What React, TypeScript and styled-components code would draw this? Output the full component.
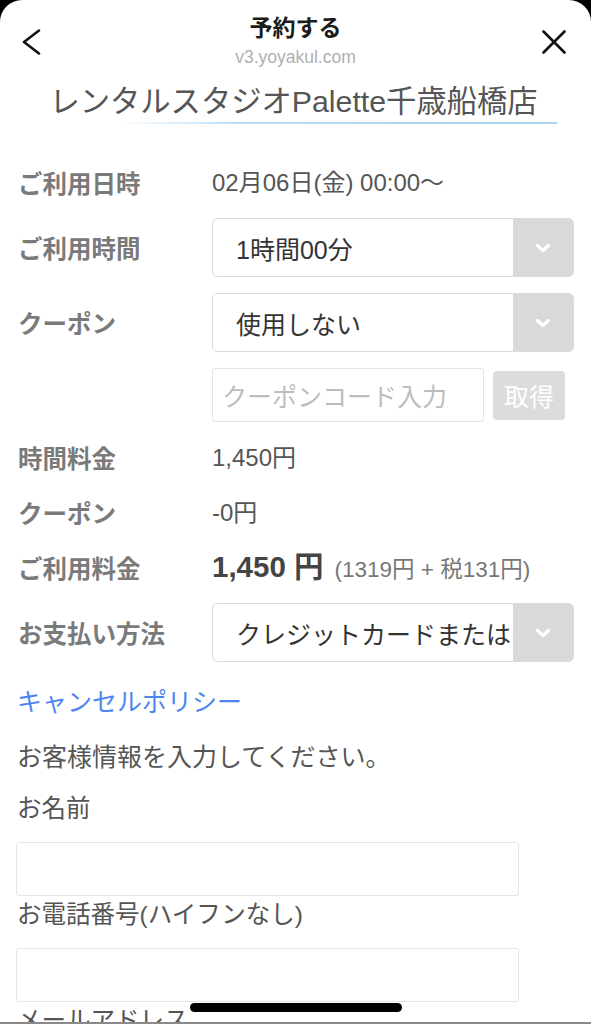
import React from "react"
import styled, { createGlobalStyle } from "styled-components"

const GlobalStyle = createGlobalStyle`
    html, body {
        margin: 0;
        padding: 0;
        background: #000;
    }
    body {
        font-family: "Liberation Sans", "Noto Sans CJK JP", sans-serif;
    }
`

const Sheet = styled.div`
    position: relative;
    height: 1024px;
    overflow: hidden;
    background: #fff;
    border-radius: 22px 22px 0 0;
`

const Header = styled.header`
    display: grid;
    grid-template-columns: 70px 1fr 70px;
    align-items: center;
    padding-top: 14px;
`

const IconButton = styled.div<{ $side: "left" | "right" }>`
    display: flex;
    justify-content: ${({ $side }) => ($side === "left" ? "flex-start" : "flex-end")};
    padding: ${({ $side }) => ($side === "left" ? "2px 0 0 20px" : "2px 25px 0 0")};
    color: #111;
`

const HeaderCenter = styled.div`
    display: flex;
    flex-direction: column;
    align-items: center;
`

const HeaderTitle = styled.div`
    font-size: 23px;
    line-height: 29px;
    font-weight: 700;
    color: #1c1c1c;
`

const HeaderUrl = styled.div`
    margin-top: 3px;
    font-size: 17.5px;
    line-height: 22px;
    color: #b0b0b0;
`

const ShopTitle = styled.h1`
    margin: 14px 34px 0 30px;
    font-size: 30.3px;
    line-height: 40px;
    font-weight: 400;
    color: #555;
    text-align: center;
    white-space: nowrap;
`

const Underline = styled.div`
    height: 2px;
    margin: 0 34px;
    background: linear-gradient(to right, rgba(168, 212, 245, 0) 0%, rgba(168, 212, 245, 0) 16%, #b6dcf6 40%, #a9d4f4 100%);
`

const Form = styled.div`
    display: flex;
    flex-direction: column;
    gap: 16px;
    margin-top: 39px;
    padding: 0 17px 0 18px;
`

const Row = styled.div<{ $tall?: boolean }>`
    display: flex;
    align-items: center;
    height: ${({ $tall }) => ($tall ? 59 : 39)}px;
`

const Label = styled.div`
    flex: 0 0 194px;
    font-size: 24.5px;
    font-weight: 700;
    color: #7a7a7a;
    white-space: nowrap;
`

const Value = styled.div`
    font-size: 24px;
    line-height: 39px;
    color: #555;
    white-space: nowrap;
`

const Total = styled.span`
    font-size: 29.5px;
    font-weight: 700;
    color: #444;
`

const TotalNote = styled.span`
    margin-left: 11px;
    font-size: 22.5px;
    color: #777;
`

const Select = styled.div`
    flex: 1;
    display: flex;
    height: 59px;
    box-sizing: border-box;
    border: 1px solid #dcdcdc;
    border-radius: 5px;
    overflow: hidden;
    background: #fff;
`

const SelectText = styled.div`
    flex: 1;
    display: flex;
    align-items: center;
    padding-left: 23px;
    font-size: 25px;
    color: #333;
    white-space: nowrap;
    overflow: hidden;
`

const SelectArrow = styled.div`
    flex: 0 0 60px;
    display: flex;
    align-items: center;
    justify-content: center;
    background: #d9d9d9;
`

const CouponRow = styled.div`
    display: flex;
    align-items: center;
    gap: 9px;
    padding-left: 194px;
    padding-right: 9px;
`

const CouponInput = styled.div`
    flex: 0 0 272px;
    height: 54px;
    box-sizing: border-box;
    display: flex;
    align-items: center;
    padding-left: 9px;
    border: 1px solid #e2e2e2;
    border-radius: 3px;
    font-size: 25px;
    color: #bdbdbd;
    white-space: nowrap;
    overflow: hidden;
`

const CouponButton = styled.div`
    flex: 1;
    height: 49px;
    display: flex;
    align-items: center;
    justify-content: center;
    background: #dcdcdc;
    border-radius: 4px;
    font-size: 25px;
    color: #fff;
`

const Link = styled.div`
    margin: 22px 0 0 17px;
    font-size: 25px;
    line-height: 36px;
    color: #4d86ef;
`

const Notice = styled.div`
    margin: 19px 0 0 17px;
    font-size: 25px;
    line-height: 36px;
    color: #555;
`

const Fields = styled.div`
    display: flex;
    flex-direction: column;
    margin-top: 15px;
    padding: 0 72px 0 16px;
`

const FieldLabel = styled.div`
    padding-left: 1px;
    font-size: 24.5px;
    line-height: 38px;
    color: #555;
    white-space: nowrap;
`

const FieldInput = styled.div`
    height: 54px;
    margin-top: 14px;
    box-sizing: border-box;
    border: 1px solid #e6e6e6;
    border-radius: 3px;
`

const BottomEdge = styled.div`
    position: absolute;
    left: 0;
    right: 0;
    bottom: 0;
    height: 2px;
    background: #8a8a8a;
`

const HomeIndicator = styled.div`
    position: absolute;
    left: 190px;
    bottom: 12px;
    width: 212px;
    height: 9px;
    border-radius: 5px;
    background: #000;
`

const Chevron = () => (
    <svg width="16" height="10" viewBox="0 0 16 10">
        <path d="M2.5 2.5 L8 7.5 L13.5 2.5" fill="none" stroke="#fff" strokeWidth="3.4" strokeLinecap="round" strokeLinejoin="round" />
    </svg>
)

const SelectBox = ({ text }: { text: string }) => (
    <Select>
        <SelectText>{text}</SelectText>
        <SelectArrow>
            <Chevron />
        </SelectArrow>
    </Select>
)

const App = () => {
    return (
        <>
            <GlobalStyle />
            <Sheet>
                <Header>
                    <IconButton $side="left">
                        <svg width="22" height="26" viewBox="0 0 22 26">
                            <path d="M19 1.5 L4 13 L19 24.5" fill="none" stroke="#111" strokeWidth="2.6" strokeLinecap="round" strokeLinejoin="round" />
                        </svg>
                    </IconButton>
                    <HeaderCenter>
                        <HeaderTitle>予約する</HeaderTitle>
                        <HeaderUrl>v3.yoyakul.com</HeaderUrl>
                    </HeaderCenter>
                    <IconButton $side="right">
                        <svg width="24" height="24" viewBox="0 0 24 24">
                            <path d="M1.5 1.5 L22.5 22.5 M22.5 1.5 L1.5 22.5" fill="none" stroke="#111" strokeWidth="2.6" strokeLinecap="round" />
                        </svg>
                    </IconButton>
                </Header>

                <ShopTitle>レンタルスタジオPalette千歳船橋店</ShopTitle>
                <Underline />

                <Form>
                    <Row>
                        <Label>ご利用日時</Label>
                        <Value>02月06日(金) 00:00〜</Value>
                    </Row>
                    <Row $tall>
                        <Label>ご利用時間</Label>
                        <SelectBox text="1時間00分" />
                    </Row>
                    <Row $tall>
                        <Label>クーポン</Label>
                        <SelectBox text="使用しない" />
                    </Row>
                    <CouponRow>
                        <CouponInput>クーポンコード入力</CouponInput>
                        <CouponButton>取得</CouponButton>
                    </CouponRow>
                    <Row>
                        <Label>時間料金</Label>
                        <Value>1,450円</Value>
                    </Row>
                    <Row>
                        <Label>クーポン</Label>
                        <Value>-0円</Value>
                    </Row>
                    <Row>
                        <Label>ご利用料金</Label>
                        <Value>
                            <Total>1,450 円</Total>
                            <TotalNote>(1319円 + 税131円)</TotalNote>
                        </Value>
                    </Row>
                    <Row $tall>
                        <Label>お支払い方法</Label>
                        <SelectBox text="クレジットカードまたはデビットカード" />
                    </Row>
                </Form>

                <Link>キャンセルポリシー</Link>
                <Notice>お客様情報を入力してください。</Notice>

                <Fields>
                    <FieldLabel>お名前</FieldLabel>
                    <FieldInput />
                    <FieldLabel>お電話番号(ハイフンなし)</FieldLabel>
                    <FieldInput />
                    <FieldLabel>メールアドレス</FieldLabel>
                    <FieldInput />
                </Fields>

                <BottomEdge />
                <HomeIndicator />
            </Sheet>
        </>
    )
}

export default App
